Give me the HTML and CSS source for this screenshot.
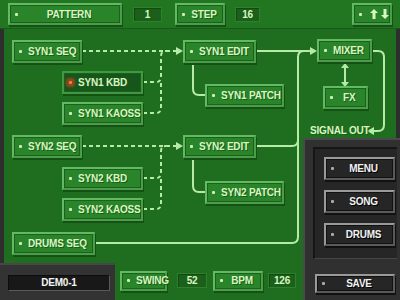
FILE: index.html
```html
<!DOCTYPE html>
<html lang="en">
<head>
    <meta charset="UTF-8">
    <title>DS-10 Patch</title>
    <link rel="stylesheet" href="styles.css">
</head>
<body>
    <div id="screen">
        <!-- top bar -->
        <div class="topbar">
            <div class="btn pattern"><span class="dot"></span><span class="label">PATTERN</span></div>
            <div class="val val-pattern">1</div>
            <div class="btn step"><span class="dot"></span><span class="label">STEP</span></div>
            <div class="val val-step">16</div>
            <div class="btn arrows">
                <span class="dot"></span>
                <svg class="updown" width="20" height="10" viewBox="0 0 20 10">
                    <path d="M4 0 L8 4 H5.5 V10 H2.5 V4 H0 Z"/>
                    <path d="M15 10 L11 6 H13.5 V0 H16.5 V6 H19 Z"/>
                </svg>
            </div>
        </div>

        <!-- patch diagram -->
        <div class="diagram">
            <svg class="wires" viewBox="0 29 400 234" width="400" height="234">
                <g class="dash" fill="none">
                    <path d="M82 51 H176"/>
                    <path d="M143 82 H156 Q161 82 161 77 V56 Q161 51 166 51"/>
                    <path d="M143 113 H156 Q161 113 161 108 V82"/>
                    <path d="M82 146 H176"/>
                    <path d="M143 178 H156 Q161 178 161 173 V151 Q161 146 166 146"/>
                    <path d="M143 209 H156 Q161 209 161 204 V178"/>
                </g>
                <g class="solid" fill="none">
                    <path d="M256 51 H311"/>
                    <path d="M304 51 Q298 51 298 57 V237 Q298 243 292 243 H95"/>
                    <path d="M256 146 H292 Q298 146 298 140"/>
                    <path d="M193 63 V89 Q193 95 199 95 H205"/>
                    <path d="M193 158 V186 Q193 192 199 192 H205"/>
                    <path d="M372 51 H378 Q384 51 384 57 V125 Q384 131 378 131 H373"/>
                    <path d="M345 67 V83"/>
                </g>
                <g class="head">
                    <polygon points="176,47 183,51 176,55"/>
                    <polygon points="176,142 183,146 176,150"/>
                    <polygon points="310,47 317,51 310,55"/>
                    <polygon points="374,127 367,131 374,135"/>
                    <polygon points="341,68 345,63 349,68"/>
                    <polygon points="341,82 345,87 349,82"/>
                </g>
            </svg>

            <div class="node n-syn1seq"><span class="dot"></span>SYN1 SEQ</div>
            <div class="node sel n-syn1kbd"><span class="dot"></span>SYN1 KBD</div>
            <div class="node n-syn1kaoss"><span class="dot"></span>SYN1 KAOSS</div>
            <div class="node n-syn1edit"><span class="dot"></span>SYN1 EDIT</div>
            <div class="node n-syn1patch"><span class="dot"></span>SYN1 PATCH</div>
            <div class="node n-mixer"><span class="dot"></span>MIXER</div>
            <div class="node n-fx"><span class="dot"></span>FX</div>
            <div class="signal">SIGNAL OUT</div>

            <div class="node n-syn2seq"><span class="dot"></span>SYN2 SEQ</div>
            <div class="node n-syn2kbd"><span class="dot"></span>SYN2 KBD</div>
            <div class="node n-syn2kaoss"><span class="dot"></span>SYN2 KAOSS</div>
            <div class="node n-syn2edit"><span class="dot"></span>SYN2 EDIT</div>
            <div class="node n-syn2patch"><span class="dot"></span>SYN2 PATCH</div>
            <div class="node n-drums"><span class="dot"></span>DRUMS SEQ</div>
        </div>

        <!-- right panel -->
        <div class="side">
            <div class="frame">
                <div class="dbtn"><span class="dot"></span><span class="label">MENU</span></div>
                <div class="dbtn"><span class="dot"></span><span class="label">SONG</span></div>
                <div class="dbtn"><span class="dot"></span><span class="label">DRUMS</span></div>
            </div>
            <div class="dbtn save"><span class="dot"></span><span class="label">SAVE</span></div>
        </div>

        <!-- bottom bar -->
        <div class="bottom-left">
            <div class="display">DEM0-1</div>
        </div>
        <div class="bottom-mid">
            <div class="btn swing"><span class="dot"></span><span class="label">SWING</span></div>
            <div class="val val-swing">52</div>
            <div class="btn bpm"><span class="dot"></span><span class="label">BPM</span></div>
            <div class="val val-bpm">126</div>
        </div>
    </div>
</body>
</html>
```

FILE: styles.css
```css
* {
    margin: 0;
    padding: 0;
    box-sizing: border-box;
}

body {
    width: 400px;
    height: 300px;
    overflow: hidden;
    background-color: #2e2e2e;
    font: bold 10px "Liberation Sans", Arial, sans-serif;
    letter-spacing: -0.2px;
    color: #d8f6c0;
}

#screen {
    width: 400px;
    height: 300px;
    display: grid;
    grid-template-columns: 115px 188px 97px;
    grid-template-rows: 29px 109px 125px 37px;
    background-color: #1f6e1f;
}

/* ---------- green buttons ---------- */
.btn,
.node {
    height: 22px;
    display: flex;
    align-items: center;
    background-color: #2a842a;
    border: 2px solid #62ba62;
    border-right-color: #4a9e4a;
    border-bottom-color: #4a9e4a;
    box-shadow: inset 0 0 0 1px #1c601c, 1px 2px 0 #155015;
    text-shadow: 1px 1px 0 #1a5c1a;
    white-space: nowrap;
}

.dot {
    width: 3px;
    height: 3px;
    flex: none;
    background-color: #cfeec0;
    border-radius: 1px;
    margin: 0 6px 0 5px;
}

.btn .label {
    flex: 1;
    text-align: center;
    padding-right: 6px;
}

.val {
    height: 15px;
    display: flex;
    align-items: center;
    justify-content: center;
    background-color: #1b5f1b;
    border: 1px solid #2c812c;
    box-shadow: inset 1px 1px 0 #134813;
}

/* ---------- top bar ---------- */
.topbar {
    grid-column: 1 / -1;
    grid-row: 1;
    display: flex;
    align-items: center;
    padding: 0 8px;
    background-color: #227622;
    border-bottom: 1px solid #185818;
}

.pattern { width: 114px; }
.val-pattern { width: 29px; margin-left: 11px; }
.step { width: 50px; margin-left: 13px; }
.val-step { width: 25px; margin-left: 10px; }
.arrows { width: 40px; margin-left: auto; }
.updown { fill: #d8f6c0; margin-left: 2px; }

/* ---------- diagram ---------- */
.diagram {
    grid-column: 1 / -1;
    grid-row: 2 / 4;
    position: relative;
    box-shadow: inset 4px 0 0 #2e2e2e, inset -4px 0 0 #2e2e2e;
}

.wires {
    position: absolute;
    left: 0;
    top: 0;
}

.wires .dash path {
    stroke: #b6eaa6;
    stroke-width: 2;
    stroke-dasharray: 4 3;
}

.wires .solid path {
    stroke: #b6eaa6;
    stroke-width: 2;
}

.wires .head polygon {
    fill: #b6eaa6;
}

.node {
    position: absolute;
    height: 23px;
}

.node.sel {
    background-color: #17561a;
    border-color: #3f9a3f;
}

.node.sel .dot {
    background-color: #ff7a3a;
    box-shadow: 0 0 2px 3px #8a4a1e;
}

.n-syn1seq   { left: 12px;  top: 11px;  width: 70px; }
.n-syn1kbd   { left: 62px;  top: 42px;  width: 81px; }
.n-syn1kaoss { left: 62px;  top: 73px;  width: 81px; }
.n-syn1edit  { left: 183px; top: 11px;  width: 73px; }
.n-syn1patch { left: 205px; top: 55px;  width: 79px; }
.n-mixer     { left: 317px; top: 10px;  width: 55px; }
.n-fx        { left: 323px; top: 57px;  width: 45px; }
.n-fx .dot   { margin-right: 10px; }
.n-syn2seq   { left: 12px;  top: 106px; width: 70px; }
.n-syn2kbd   { left: 62px;  top: 138px; width: 81px; }
.n-syn2kaoss { left: 62px;  top: 169px; width: 81px; }
.n-syn2edit  { left: 183px; top: 106px; width: 73px; }
.n-syn2patch { left: 205px; top: 152px; width: 79px; }
.n-drums     { left: 12px;  top: 203px; width: 83px; }

.signal {
    position: absolute;
    left: 310px;
    top: 96px;
    white-space: nowrap;
    text-shadow: 1px 1px 0 #1a5c1a;
}

/* ---------- right dark panel ---------- */
.side {
    grid-column: 3;
    grid-row: 3 / 5;
    position: relative;
    z-index: 1;
    display: flex;
    flex-direction: column;
    background-color: #303030;
    border-top: 2px solid #4a4a4a;
    border-left: 2px solid #4a4a4a;
    padding: 7px 3px 7px 8px;
    color: #f2f2f2;
}

.frame {
    flex: none;
    height: 112px;
    display: flex;
    flex-direction: column;
    gap: 10px;
    padding: 8px 0 0 9px;
    background-color: #262626;
    border-top: 2px solid #161616;
    border-left: 2px solid #161616;
    border-bottom: 1px solid #454545;
}

.dbtn {
    height: 23px;
    width: 71px;
    display: flex;
    align-items: center;
    background-color: #262626;
    border: 2px solid #9a9a9a;
    border-right-color: #5a5a5a;
    border-bottom-color: #5a5a5a;
    box-shadow: inset 0 0 0 1px #111, 1px 2px 0 #111;
    text-shadow: 1px 1px 0 #000;
}

.dbtn .dot {
    background-color: #aaa;
}

.dbtn .label {
    flex: 1;
    text-align: center;
    padding-right: 6px;
}

.save {
    width: 80px;
    height: 19px;
    margin-top: 15px;
    margin-left: 2px;
}

/* ---------- bottom bar ---------- */
.bottom-left {
    grid-column: 1;
    grid-row: 4;
    display: flex;
    align-items: center;
    padding: 0 5px 0 8px;
    background-color: #333;
    border-top: 2px solid #474747;
}

.display {
    width: 102px;
    height: 16px;
    display: flex;
    align-items: center;
    justify-content: center;
    background-color: #181818;
    border: 1px solid #5a5a5a;
    border-top-color: #0c0c0c;
    border-left-color: #0c0c0c;
    color: #f4f4f4;
}

.bottom-mid {
    grid-column: 2;
    grid-row: 4;
    display: flex;
    align-items: center;
    padding: 0 0 2px 5px;
}

.bottom-mid .btn { height: 20px; }
.swing { width: 47px; }
.val-swing { width: 30px; margin-left: 10px; }
.bpm { width: 50px; margin-left: 6px; }
.val-bpm { width: 28px; margin-left: 5px; }
```
